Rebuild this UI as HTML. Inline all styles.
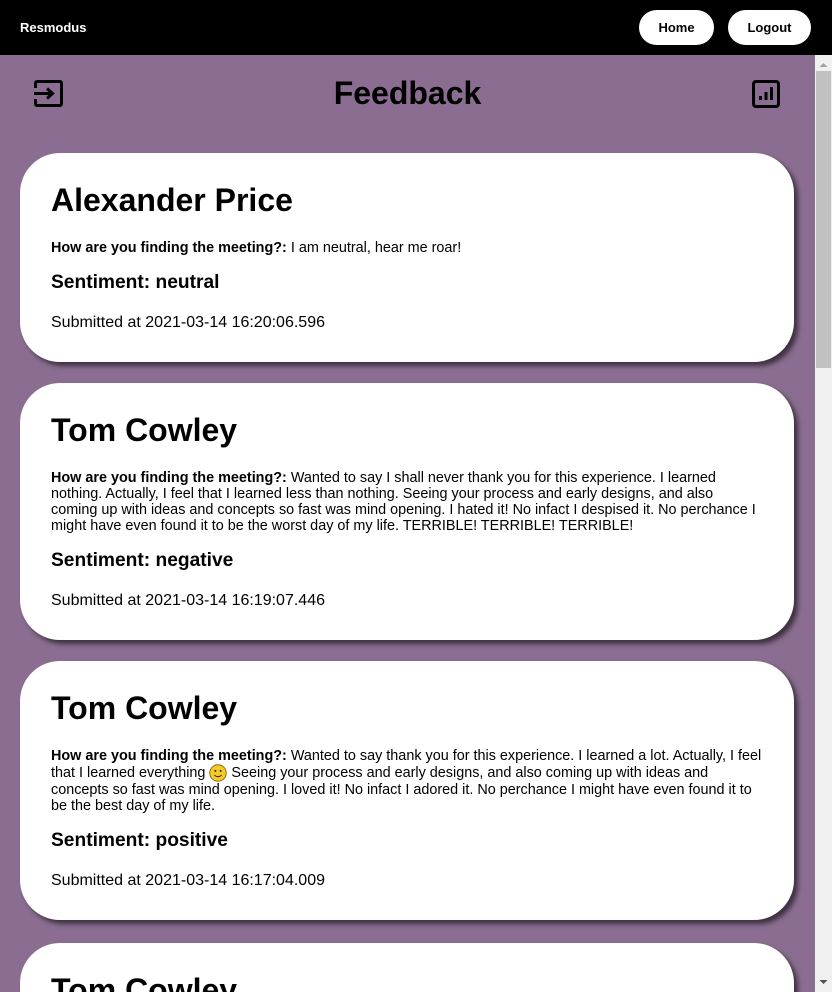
<!DOCTYPE html>
<html><head><meta charset="utf-8"><style>
*{box-sizing:border-box}
html,body{margin:0;padding:0;width:832px;height:992px;overflow:hidden;font-family:"Liberation Sans",Arial,sans-serif;color:#000}
body{background:#8a6d90;position:relative}
.nav{position:absolute;left:0;top:0;width:832px;height:55px;background:#000}
.brand{position:absolute;left:20px;top:20px;color:#fff;font-weight:bold;font-size:13px;line-height:15px}
.btn{position:absolute;top:10px;height:35px;background:#fff;border-radius:18px;font-weight:bold;font-size:13px;line-height:35px;text-align:center}
.sb{position:absolute;left:815px;top:55px;width:17px;height:937px;background:#f0f0f0}
.thumb{position:absolute;left:816px;top:71px;width:15px;height:297px;background:#c1c1c1}
.content{position:absolute;left:0;top:55px;width:815px;height:937px;overflow:hidden}
.title{position:absolute;left:0;width:815px;top:20px;text-align:center;font-size:32px;font-weight:bold;line-height:37px}
.card{position:absolute;left:20px;width:774px;background:#fff;border-radius:40px;box-shadow:4px 4px 5px rgba(0,0,0,.55);padding:29px 31px 30px 31px}
.card h1{margin:0 0 21px;font-size:32px;line-height:37px}
.q{font-size:14.4px;line-height:16px;margin:0}
.card h3{margin:14.5px 0 20.5px;font-size:19.2px;line-height:23px}
.s{font-size:16px;line-height:18px;margin:0}
</style></head><body>
<div class="nav">
<div class="brand">Resmodus</div>
<div class="btn" style="left:639px;width:75px">Home</div>
<div class="btn" style="left:728px;width:83px">Logout</div>
</div>
<div class="sb"></div><div class="thumb"></div>
<svg style="position:absolute;left:818px;top:61px" width="11" height="8"><path d="M1.5 6L5.5 2L9.5 6Z" fill="#a3a3a3"/></svg>
<svg style="position:absolute;left:818px;top:978px" width="11" height="8"><path d="M1.5 2L5.5 6L9.5 2Z" fill="#505050"/></svg>
<svg style="position:absolute;left:32px;top:78px" width="32" height="31" viewBox="0 0 32 31"><path d="M3.5 10V5.5Q3.5 3.5 5.5 3.5H27.5Q29.5 3.5 29.5 5.5V25.5Q29.5 27.5 27.5 27.5H5.5Q3.5 27.5 3.5 25.5V21" fill="none" stroke="#000" stroke-width="3"/><path d="M2 15.5H20M15 10.5L20.5 15.5L15 20.5" fill="none" stroke="#000" stroke-width="3"/></svg>
<svg style="position:absolute;left:750px;top:78px" width="32" height="31" viewBox="0 0 32 31"><rect x="3.5" y="3.5" width="25" height="25" rx="2.5" fill="none" stroke="#000" stroke-width="3"/><path d="M10.5 18v4M16 14v8M21.5 9v13" stroke="#000" stroke-width="3"/></svg>
<div class="content">
<div class="title">Feedback</div>
<div class="card" style="top:98px">
<h1>Alexander Price</h1>
<p class="q"><b>How are you finding the meeting?:</b> I am neutral, hear me roar!</p>
<h3>Sentiment: neutral</h3>
<p class="s">Submitted at 2021-03-14 16:20:06.596</p>
</div>
<div class="card" style="top:328px">
<h1>Tom Cowley</h1>
<p class="q"><b>How are you finding the meeting?:</b> Wanted to say I shall never thank you for this experience. I learned nothing. Actually, I feel that I learned less than nothing. Seeing your process and early designs, and also coming up with ideas and concepts so fast was mind opening. I hated it! No infact I despised it. No perchance I might have even found it to be the worst day of my life. TERRIBLE! TERRIBLE! TERRIBLE!</p>
<h3>Sentiment: negative</h3>
<p class="s">Submitted at 2021-03-14 16:19:07.446</p>
</div>
<div class="card" style="top:606px">
<h1>Tom Cowley</h1>
<p class="q"><b>How are you finding the meeting?:</b> Wanted to say thank you for this experience. I learned a lot. Actually, I feel that I learned everything <svg width="18" height="18" viewBox="0 0 17 17" style="vertical-align:-5px"><circle cx="8.5" cy="8.5" r="7.8" fill="#f7c928" stroke="#8a6a10" stroke-width="0.9"/><circle cx="6" cy="6.5" r="1" fill="#333"/><circle cx="11" cy="6.5" r="1" fill="#333"/><path d="M5 10.5Q8.5 13.5 12 10.5" fill="none" stroke="#333" stroke-width="1"/></svg> Seeing your process and early designs, and also coming up with ideas and concepts so fast was mind opening. I loved it! No infact I adored it. No perchance I might have even found it to be the best day of my life.</p>
<h3>Sentiment: positive</h3>
<p class="s">Submitted at 2021-03-14 16:17:04.009</p>
</div>
<div class="card" style="top:888px;height:200px">
<h1>Tom Cowley</h1>
</div>
</div>
</body></html>
